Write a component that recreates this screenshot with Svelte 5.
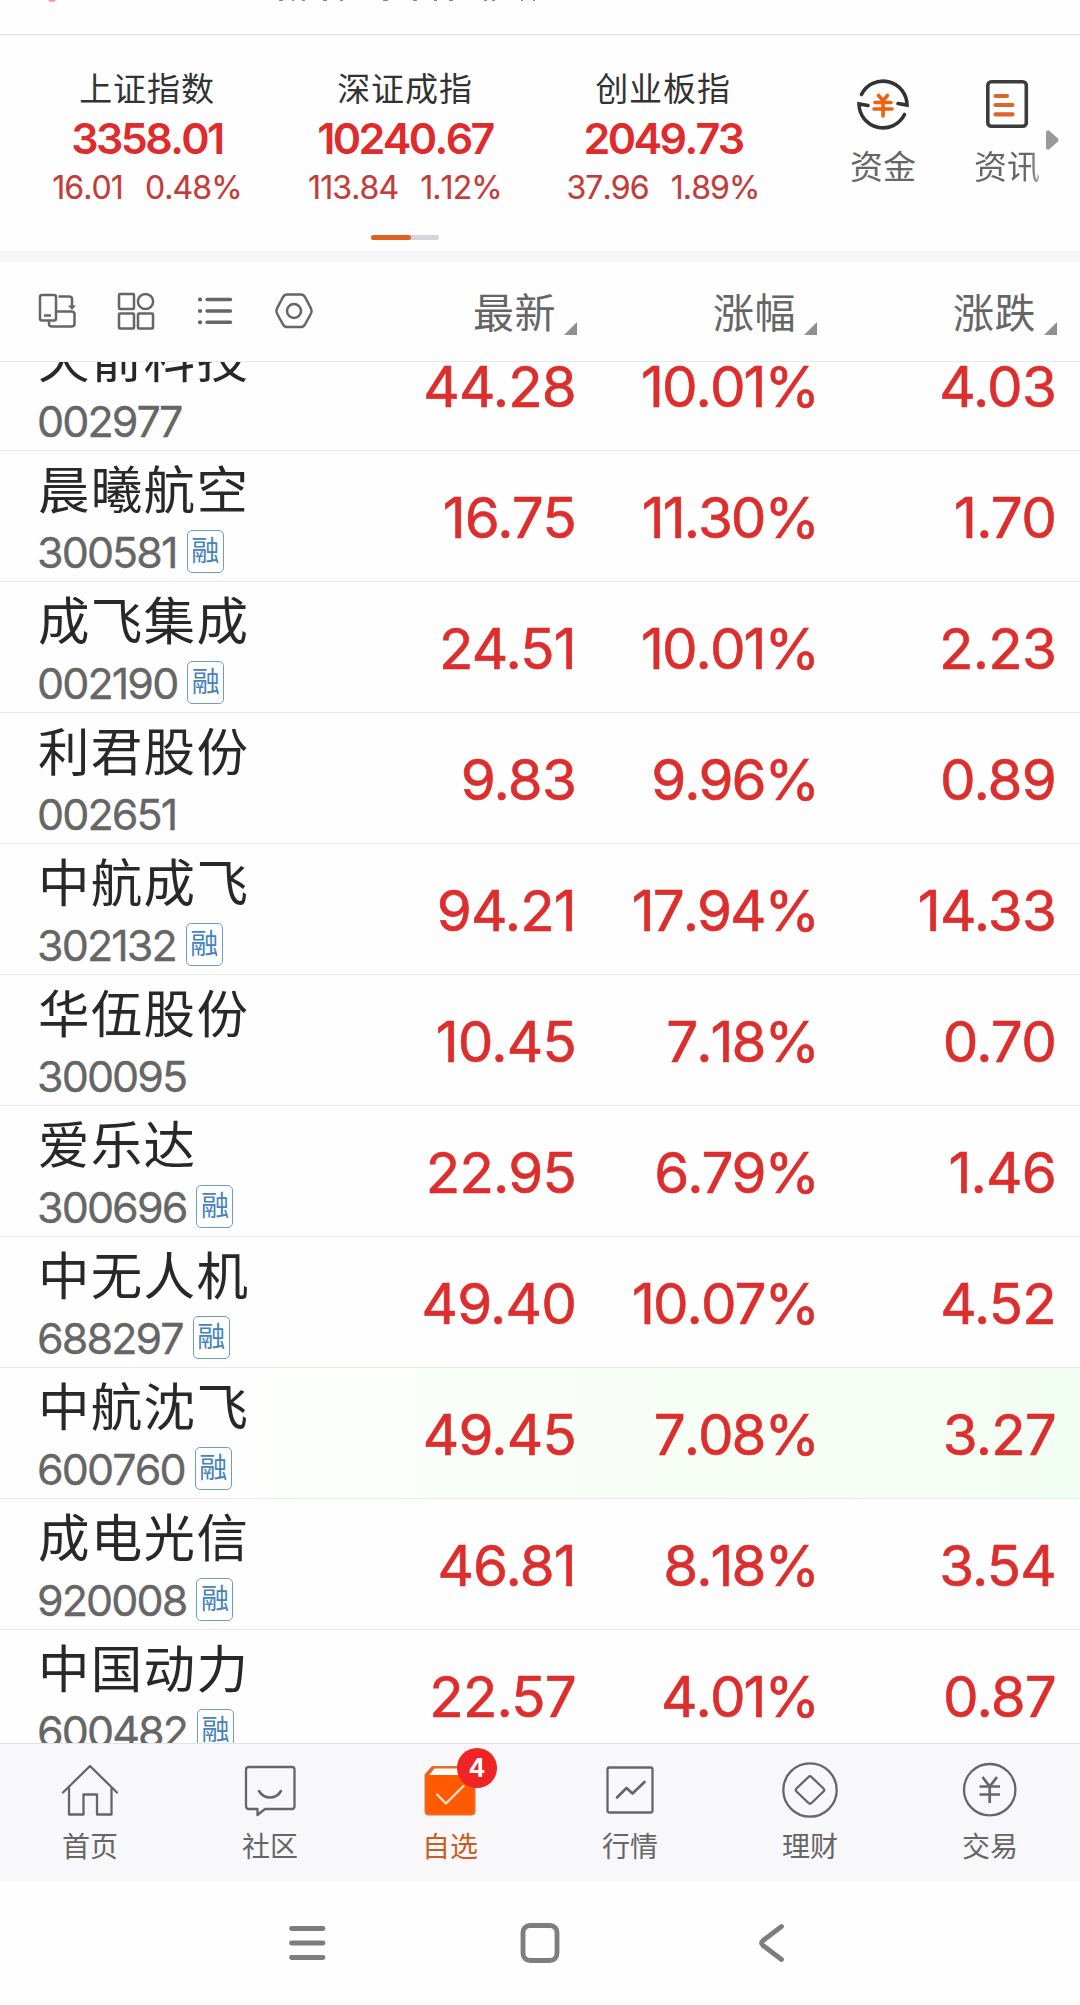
<script>
  const indices = [
    { name: '上证指数', value: '3358.01', change: '16.01', pct: '0.48%' },
    { name: '深证成指', value: '10240.67', change: '113.84', pct: '1.12%' },
    { name: '创业板指', value: '2049.73', change: '37.96', pct: '1.89%' }
  ];
  const columns = ['最新', '涨幅', '涨跌'];
  const stocks = [
    { name: '天箭科技', code: '002977', margin: false, last: '44.28', pct: '10.01%', diff: '4.03' },
    { name: '晨曦航空', code: '300581', margin: true, last: '16.75', pct: '11.30%', diff: '1.70' },
    { name: '成飞集成', code: '002190', margin: true, last: '24.51', pct: '10.01%', diff: '2.23' },
    { name: '利君股份', code: '002651', margin: false, last: '9.83', pct: '9.96%', diff: '0.89' },
    { name: '中航成飞', code: '302132', margin: true, last: '94.21', pct: '17.94%', diff: '14.33' },
    { name: '华伍股份', code: '300095', margin: false, last: '10.45', pct: '7.18%', diff: '0.70' },
    { name: '爱乐达', code: '300696', margin: true, last: '22.95', pct: '6.79%', diff: '1.46' },
    { name: '中无人机', code: '688297', margin: true, last: '49.40', pct: '10.07%', diff: '4.52' },
    { name: '中航沈飞', code: '600760', margin: true, last: '49.45', pct: '7.08%', diff: '3.27', flash: true },
    { name: '成电光信', code: '920008', margin: true, last: '46.81', pct: '8.18%', diff: '3.54' },
    { name: '中国动力', code: '600482', margin: true, last: '22.57', pct: '4.01%', diff: '0.87' }
  ];
  const tabs = ['首页', '社区', '自选', '行情', '理财', '交易'];
  const activeTab = 2;
</script>

<div class="screen">
  <div class="ticker">
    <svg width="1080" height="3" viewBox="0 0 1080 3">
      <path d="M48 0h8q-1 2-4 2t-4-2z" fill="#ee9a96" />
      <path d="M279 .5h4M292 .5h2M302 .5h3M323 .5h4M340 .5h3M383 .5h5M413 .5h4M434 .5h3M449 .5h4M484 .5h3M492 .5h3M521 .5h2M533 .5h2" stroke="#888" />
    </svg>
  </div>

  <section class="summary">
    <div class="indices">
      {#each indices as item}
        <div class="index">
          <div class="index-name">{item.name}</div>
          <div class="index-value">{item.value}</div>
          <div class="index-change"><span>{item.change}</span><span>{item.pct}</span></div>
        </div>
      {/each}
    </div>
    <div class="shortcuts">
      <div class="shortcut">
        <svg width="56" height="56" viewBox="0 0 56 56" fill="none" stroke="#333" stroke-width="3.6" stroke-linecap="round">
          <path d="M6.500 18.500A24 24 0 0 1 52 29L43 27.500" />
          <path d="M49.500 38.500A24 24 0 0 1 4 28L13 29.500" />
          <path d="M23.500 19.500L28 24.500L32.500 19.500M20 26.500H36M19 33H37M28 26V40" stroke="#f0600f" />
        </svg>
        <span>资金</span>
      </div>
      <div class="shortcut fade">
        <svg width="56" height="56" viewBox="0 0 56 56" fill="none" stroke-linecap="round">
          <rect x="8.800" y="5.800" width="38.500" height="44.500" rx="3.500" stroke="#3c3c3c" stroke-width="3.600" />
          <path d="M16.500 20H28M16.500 29H33.500M16.500 38.300H33.500" stroke="#dc662a" stroke-width="4.200" />
        </svg>
        <span>资讯</span>
      </div>
    </div>
    <svg class="more" width="14" height="22" viewBox="0 0 14 22"><path d="M1 3Q1 1 4 1.500L13 9.500Q14 11 13 12.500L4 20.500Q1 21 1 19Z" fill="#999" /></svg>
    <div class="pager"><i></i></div>
  </section>

  <header class="toolbar">
    <div class="tools">
      <svg width="40" height="40" viewBox="0 0 40 40" class="line">
        <rect x="3" y="4" width="16" height="25.500" rx="2" /><path d="M7 24.500H14M21.500 5.500H32Q35 5.500 35 8V15" />
        <path d="M31 14.500H39L35 19Z" fill="#666" stroke="none" />
        <path d="M19 20.500H34Q37.500 20.500 37.500 23V33Q37.500 35.500 34 35.500H15Q12 35.500 12 33V30" />
      </svg>
      <svg width="40" height="40" viewBox="0 0 40 40" class="line">
        <rect x="3" y="3" width="15" height="15" rx="1" /><circle cx="29.500" cy="10.500" r="7.600" />
        <rect x="3" y="22.500" width="15" height="15" rx="1" /><rect x="22" y="22.500" width="15" height="15" rx="1" />
      </svg>
      <svg width="40" height="40" viewBox="0 0 40 40" class="line list">
        <path d="M12 8.500H35.500M12 20H35.500M12 31.300H35.500" /><path d="M5 8.500H5.100M5 20H5.100M5 31.300H5.100" stroke-width="4.200" />
      </svg>
      <svg width="40" height="40" viewBox="0 0 40 40" class="line">
        <path d="M13 3.500H27Q29.500 3.500 31 6L37 17.500Q38.200 20 37 22.500L31 33.500Q29.500 36 27 36H13Q10.500 36 9 33.500L3 22.500Q1.800 20 3 17.500L9 6Q10.500 3.500 13 3.500Z" />
        <circle cx="20" cy="20" r="7" />
      </svg>
    </div>
    {#each columns as label}
      <div class="column"><span>{label}</span><svg width="13" height="13" viewBox="0 0 13 13"><path d="M13 0V13H0Z" fill="#8e8e93" /></svg></div>
    {/each}
  </header>

  <main class="list-view">
    {#each stocks as stock}
      <div class="row" class:flash={stock.flash}>
        <div class="title">
          <div class="name">{stock.name}</div>
          <div class="code"><span>{stock.code}</span>{#if stock.margin}<b>融</b>{/if}</div>
        </div>
        <div class="num">{stock.last}</div>
        <div class="num pct">{stock.pct}</div>
        <div class="num">{stock.diff}</div>
      </div>
    {/each}
  </main>

  <nav class="tabs">
    {#each tabs as label, i}
      <div class="tab" class:active={i === activeTab}>
        <div class="tab-icon">
          <svg width="60" height="60" viewBox="0 0 60 60" fill="none" stroke="#666" stroke-width="2.3" stroke-linecap="round" stroke-linejoin="round">
            {#if i === 0}
              <path d="M3 32.500L30 6L57 32.500M9 28V54.500H23.500V34.500H37V54.500H51.500V28" />
            {:else if i === 1}
              <path d="M9 7H52Q54.500 7 54.500 9.500V46Q54.500 49 52 49H25L17.500 55V49H9Q6 49 6 46V9.500Q6 7 9 7Z" /><path d="M19 31Q23 37.500 30 37.500T41 31" stroke-width="2.600" />
            {:else if i === 2}
              <path d="M5.500 15L12.500 7H52Q54.500 7 54.500 10V51Q54.500 54.500 51 54.500H9Q5.500 54.500 5.500 51Z" fill="#ff5a00" stroke="#e96a25" stroke-width="2" />
              <path d="M9 15L14.500 8.500H50V15Z" fill="#fff" stroke="none" /><path d="M17 34.500L26 43.500L43.500 26" stroke="#ffe0c8" />
            {:else if i === 3}
              <rect x="7.500" y="7.500" width="45" height="45" rx="2" /><path d="M17 37.500L26.500 28L32.500 33.500L44.500 22" stroke-width="2.700" />
            {:else if i === 4}
              <circle cx="30" cy="30" r="26.700" /><path d="M28.500 17Q30 15.500 31.500 17L43.500 28.500Q45 30 43.500 31.500L31.500 43Q30 44.500 28.500 43L16.500 31.500Q15 30 16.500 28.500Z" />
            {:else}
              <circle cx="29.700" cy="29.700" r="25.700" /><path d="M22.500 17L29.700 26.500L37 17M19.500 26.500H40M19.500 34.500H40M29.700 26.500V43" stroke-width="2.700" stroke-linecap="butt" />
            {/if}
          </svg>
          {#if i === activeTab}<em>4</em>{/if}
        </div>
        <span>{label}</span>
      </div>
    {/each}
  </nav>

  <footer class="system">
    <svg width="60" height="60" viewBox="0 0 60 60"><path d="M14.500 15.500H46M14.500 30H46M14.500 44.500H46" /></svg>
    <svg width="60" height="60" viewBox="0 0 60 60"><rect x="13" y="12.500" width="34" height="35" rx="7" /></svg>
    <svg width="60" height="60" viewBox="0 0 60 60"><path d="M38.500 13.500L20 27.500Q17 30 20 32.500L38.500 46.500" /></svg>
  </footer>
</div>

<style>
  :global(body) { background: #fefefe; }
  .screen {
    width: 1080px; height: 2005px; overflow: hidden; display: flex; flex-direction: column;
    background: #fefefe; color: #282828; font-family: Inter, 'Noto Sans CJK SC', sans-serif; font-weight: 400;
    font-kerning: none;
  }
  svg { display: block; flex: none; }
  .ticker { height: 34px; flex: none; border-bottom: 1px solid #dfe1e1; }

  .summary { position: relative; flex: none; height: 216px; display: flex; border-bottom: 11px solid #f6f7fa; padding-left: 18px; }
  .indices { display: flex; }
  .index { width: 258px; text-align: center; padding-top: 32px; }
  .index-name { font-size: 33px; line-height: 44px; letter-spacing: .9px; color: #333; }
  .index-value { font-size: 43px; line-height: 52px; margin-top: 1px; font-weight: 600; color: #de2c2c; letter-spacing: -2.600px; }
  .index-change { display: flex; justify-content: center; gap: 22px; font-size: 32px; line-height: 44px; margin-top: 2px; color: #c23c3a; letter-spacing: -.9px; -webkit-text-stroke: .2px currentColor; }
  .shortcuts { display: flex; margin-left: 56px; padding-top: 41px; gap: 54px; }
  .shortcut { width: 70px; display: flex; flex-direction: column; align-items: center; font-size: 33px; line-height: 44px; color: #666; }
  .shortcut span { margin-top: 13px; white-space: nowrap; }
  .fade span { background: linear-gradient(90deg, #666 85%, #aaa 98%); background-clip: text; color: transparent; }
  .more { position: absolute; left: 1045px; top: 94px; }
  .pager { position: absolute; left: 371px; top: 200px; width: 68px; height: 5px; border-radius: 3px; background: #d4d5d8; }
  .pager i { display: block; width: 40px; height: 5px; border-radius: 3px; background: #df6320; }

  .toolbar { height: 99px; flex: none; display: grid; grid-template-columns: 337px 240px 240px 240px; border-bottom: 1px solid #e8e9e9; color: #666; }
  .tools { display: flex; gap: 39px; padding: 29px 0 0 37px; }
  .line { fill: none; stroke: #666; stroke-width: 2.500; stroke-linejoin: round; }
  .list { stroke-width: 3.400; stroke-linecap: round; }
  .column { display: flex; justify-content: flex-end; align-items: flex-end; gap: 8px; padding-bottom: 26px; }
  .column span { font-size: 41px; line-height: 46px; letter-spacing: .5px; margin-bottom: -1px; }

  .list-view { height: 1381px; flex: none; overflow: hidden; display: flex; flex-direction: column; }
  .row { flex: none; height: 130px; border-bottom: 1px solid #e9eaea; display: grid; grid-template-columns: 337px 240px 241px 239px; }
  .row:first-child { margin-top: -42px; }
  .flash { background: linear-gradient(90deg, #fefefe 15%, #f7fef6 65%, #f2fdf3); }
  .title { padding: 8px 0 0 38px; }
  .name { font-size: 51.500px; line-height: 62px; letter-spacing: 1.300px; white-space: nowrap; }
  .code { display: flex; align-items: center; height: 42px; margin-top: 9px; gap: 9px; font-size: 43px; color: #666; letter-spacing: -1.900px; }
  .code span { position: relative; top: 1px; left: -1px; -webkit-text-stroke: .3px currentColor; }
  .code b { box-sizing: border-box; width: 37px; height: 43px; border: 1.500px solid #6d9fc6; border-radius: 5px; font-size: 28px; font-weight: 400; line-height: 41px; letter-spacing: 0; color: #4583ba; display: flex; justify-content: center; }
  .num { padding-right: 1px; text-align: right; font-size: 56.500px; line-height: 133px; color: #dc2e2d; letter-spacing: -.8px; font-kerning: normal; -webkit-text-stroke: .6px currentColor; }
  .pct { padding-right: 0; letter-spacing: -2px; font-kerning: none; }

  .tabs { height: 137px; flex: none; display: flex; border-top: 1px solid #e2e3e4; background: #f8f8fb; }
  .tab { width: 180px; padding-top: 16px; display: flex; flex-direction: column; align-items: center; font-size: 28px; line-height: 40px; color: #666; }
  .tab > span { margin-top: 7px; }
  .active { color: #cc5d20; }
  .tab-icon { position: relative; }
  .tab-icon em { position: absolute; left: 37px; top: -12px; width: 40px; height: 40px; border-radius: 50%; background: #f02424; color: #fff; font: 700 25px/40px Inter, sans-serif; text-align: center; }

  .system { flex: none; height: 124px; display: flex; justify-content: center; gap: 173px; padding-top: 32px; box-sizing: border-box; }
  .system svg { fill: none; stroke: #7d7d7d; stroke-width: 4.800; stroke-linecap: round; }
</style>
